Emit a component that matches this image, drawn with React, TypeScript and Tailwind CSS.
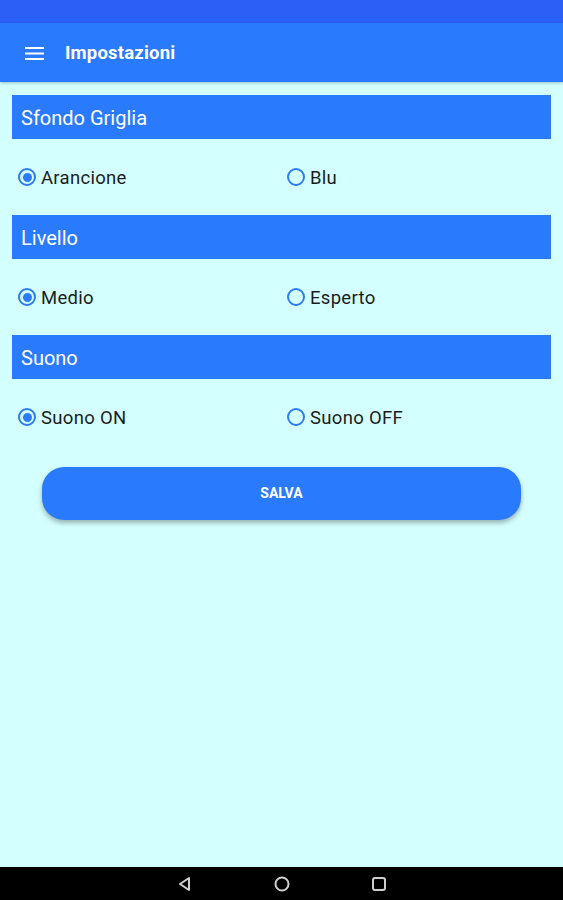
import { useState } from 'react';

interface Option {
  value: string;
  label: string;
}

interface Section {
  key: string;
  title: string;
  options: [Option, Option];
}

const SECTIONS: Section[] = [
  {
    key: 'sfondo',
    title: 'Sfondo Griglia',
    options: [
      { value: 'arancione', label: 'Arancione' },
      { value: 'blu', label: 'Blu' },
    ],
  },
  {
    key: 'livello',
    title: 'Livello',
    options: [
      { value: 'medio', label: 'Medio' },
      { value: 'esperto', label: 'Esperto' },
    ],
  },
  {
    key: 'suono',
    title: 'Suono',
    options: [
      { value: 'on', label: 'Suono ON' },
      { value: 'off', label: 'Suono OFF' },
    ],
  },
];

function Radio({ checked, label, onClick }: { checked: boolean; label: string; onClick: () => void }) {
  return (
    <button type="button" onClick={onClick} className="flex items-center gap-[5px] text-left">
      <span className="w-[18px] h-[18px] rounded-full border-2 border-[#2f7bf6] flex items-center justify-center flex-shrink-0">
        {checked && <span className="w-[9px] h-[9px] rounded-full bg-[#2f7bf6]" />}
      </span>
      <span className="text-[18.5px] text-[#1c1c1c] leading-none tracking-[0.3px] pt-[2px]">{label}</span>
    </button>
  );
}

export default function App() {
  const [values, setValues] = useState<Record<string, string>>({
    sfondo: 'arancione',
    livello: 'medio',
    suono: 'on',
  });

  return (
    <div className="w-[563px] h-[900px] flex flex-col bg-[#d4ffff] font-['Roboto',sans-serif] overflow-hidden">
      {/* Status bar */}
      <div className="h-[23px] bg-[#2c5ff6] flex-shrink-0" />

      {/* App bar */}
      <header className="h-[59px] bg-[#2a7afe] flex items-center px-[25px] gap-[21px] shadow-[0_1px_3px_rgba(0,0,0,0.25)] flex-shrink-0 z-10">
        <svg width="19" height="13" viewBox="0 0 19 13" className="flex-shrink-0 mt-[1px]">
          <rect x="0" y="0" width="19" height="2" fill="white" />
          <rect x="0" y="5.5" width="19" height="2" fill="white" />
          <rect x="0" y="11" width="19" height="2" fill="white" />
        </svg>
        <h1 className="text-white text-[18.5px] font-bold tracking-[0.2px] mt-[3px]">Impostazioni</h1>
      </header>

      {/* Content */}
      <main className="flex-1 px-[12px] pt-[13px]">
        {SECTIONS.map((section) => (
          <section key={section.key}>
            <div className="h-[44px] bg-[#2a7afe] flex items-center px-[9px]">
              <h2 className="text-white text-[20px] pt-[1px]">{section.title}</h2>
            </div>
            <div className="h-[76px] grid grid-cols-[269px_1fr] items-center pl-[6px]">
              {section.options.map((opt) => (
                <Radio
                  key={opt.value}
                  label={opt.label}
                  checked={values[section.key] === opt.value}
                  onClick={() => setValues({ ...values, [section.key]: opt.value })}
                />
              ))}
            </div>
          </section>
        ))}

        <div className="px-[30px] pt-[12px]">
          <button
            type="button"
            className="w-full h-[53px] rounded-[22px] bg-[#2a7afe] text-white text-[14px] font-bold shadow-[0_3px_5px_rgba(0,0,0,0.3)]"
          >
            SALVA
          </button>
        </div>
      </main>

      {/* Navigation bar */}
      <nav className="h-[33px] bg-black flex items-center justify-center gap-[81px] flex-shrink-0">
        <svg width="16" height="16" viewBox="0 0 16 16">
          <path d="M12 2 L3 8 L12 14 Z" fill="none" stroke="#cfcfcf" strokeWidth="2" strokeLinejoin="round" />
        </svg>
        <svg width="16" height="16" viewBox="0 0 16 16">
          <circle cx="8" cy="8" r="6.5" fill="none" stroke="#cfcfcf" strokeWidth="2" />
        </svg>
        <svg width="16" height="16" viewBox="0 0 16 16">
          <rect x="2" y="2" width="12" height="12" rx="2" fill="none" stroke="#cfcfcf" strokeWidth="2" />
        </svg>
      </nav>
    </div>
  );
}
